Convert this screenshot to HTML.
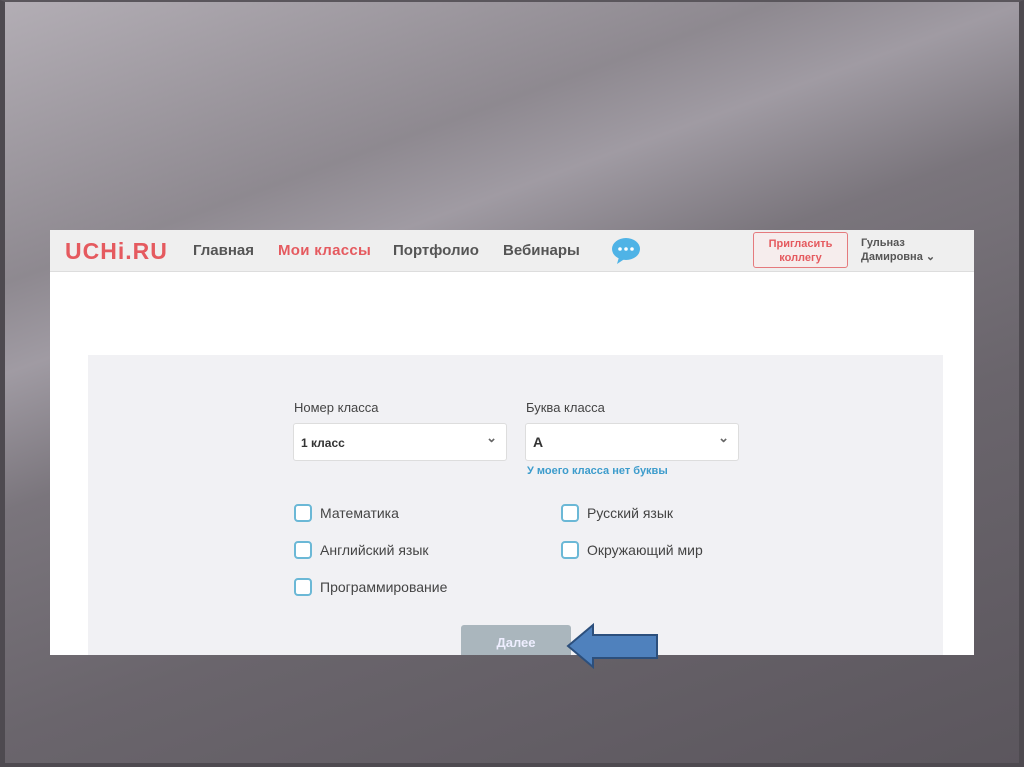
<!DOCTYPE html>
<html><head><meta charset="utf-8"><style>
*{margin:0;padding:0;box-sizing:border-box}
body{width:1024px;height:767px;overflow:hidden;position:relative;font-family:"Liberation Sans",sans-serif;
background:linear-gradient(160deg,#b3aeb5 0%,#8e8990 25%,#a09ba3 33%,#7a757c 45%,#6a656c 65%,#5b565d 100%);}
.frame{position:absolute;left:0;top:0;width:1024px;height:767px;border:5px solid #4e4a50;border-top:2px solid #5a565c;border-bottom:4px solid #4e4a50}
.shot{position:absolute;left:50px;top:230px;width:924px;height:425px;background:#fff;overflow:hidden}
.hdr{height:42px;background:#efefef;border-bottom:1px solid #ddd;position:relative}
.hdr span{position:absolute;top:12px;font-weight:bold;font-size:15px;color:#555}
.logo{left:15px;top:8px!important;font-size:23px!important;color:#e55a5f!important;letter-spacing:1px}
.inv{position:absolute;left:703px;top:2px;width:95px;height:36px;border:1px solid #e57a7d;border-radius:3px;color:#e55a5f;font-size:11px;font-weight:bold;text-align:center;line-height:14px;padding-top:4px;background:#f6eded}
.user{position:absolute;left:811px;top:6px;font-size:11px;font-weight:bold;color:#555;line-height:14px}
.panel{position:absolute;left:38px;top:125px;width:855px;height:310px;background:#f1f1f4}
.lbl{position:absolute;font-size:13px;color:#444}
.sel{position:absolute;width:214px;height:38px;background:#fff;border:1px solid #ddd;border-radius:3px;font-size:12px;font-weight:bold;color:#333;padding:12px 7px}
.sel:after{content:"⌄";position:absolute;right:9px;top:6px;font-size:13px;color:#666}
.cb{position:absolute;font-size:14px;color:#444}
.cb i{position:absolute;left:-26px;top:-1px;width:18px;height:18px;border:2px solid #6bb8d6;border-radius:4px;background:#fff}
.btn{position:absolute;left:373px;top:270px;width:110px;height:40px;background:#aab6bd;border-radius:3px;color:#eef;font-weight:bold;font-size:13px;text-align:center;padding-top:10px}
</style></head><body>
<div class="frame"></div>
<div class="shot">
<div class="hdr">
<span class="logo">UCHi.RU</span>
<span style="left:143px">Главная</span>
<span style="left:228px;color:#e55a5f;letter-spacing:.3px">Мои классы</span>
<span style="left:343px">Портфолио</span>
<span style="left:453px">Вебинары</span>
<svg style="position:absolute;left:561px;top:7px" width="32" height="28"><ellipse cx="15" cy="12" rx="14" ry="11" fill="#4fb3e6"/><path d="M8 20 L6 27 L15 21Z" fill="#4fb3e6"/><circle cx="9" cy="12" r="1.8" fill="#fff"/><circle cx="15" cy="12" r="1.8" fill="#fff"/><circle cx="21" cy="12" r="1.8" fill="#fff"/></svg>
<div class="inv">Пригласить<br>коллегу</div>
<div class="user">Гульназ<br>Дамировна ⌄</div>
</div>
<div class="panel">
<div class="lbl" style="left:206px;top:45px">Номер класса</div>
<div class="lbl" style="left:438px;top:45px">Буква класса</div>
<div class="sel" style="left:205px;top:68px">1 класс</div>
<div class="sel" style="left:437px;top:68px;font-size:14px;padding-top:10px">A</div>
<div style="position:absolute;left:439px;top:110px;font-size:11px;font-weight:bold;color:#3d9ccc">У моего класса нет буквы</div>
<div class="cb" style="left:232px;top:150px"><i></i>Математика</div>
<div class="cb" style="left:499px;top:150px"><i></i>Русский язык</div>
<div class="cb" style="left:232px;top:187px"><i></i>Английский язык</div>
<div class="cb" style="left:499px;top:187px"><i></i>Окружающий мир</div>
<div class="cb" style="left:232px;top:224px"><i></i>Программирование</div>
<div class="btn">Далее</div>
</div>
</div>
<svg style="position:absolute;left:565px;top:622px" width="96" height="48"><path d="M3 24 L28 3 L28 13 L92 13 L92 36 L28 36 L28 45Z" fill="#4f81bd" stroke="#2c4f7c" stroke-width="2"/></svg>
</body></html>
